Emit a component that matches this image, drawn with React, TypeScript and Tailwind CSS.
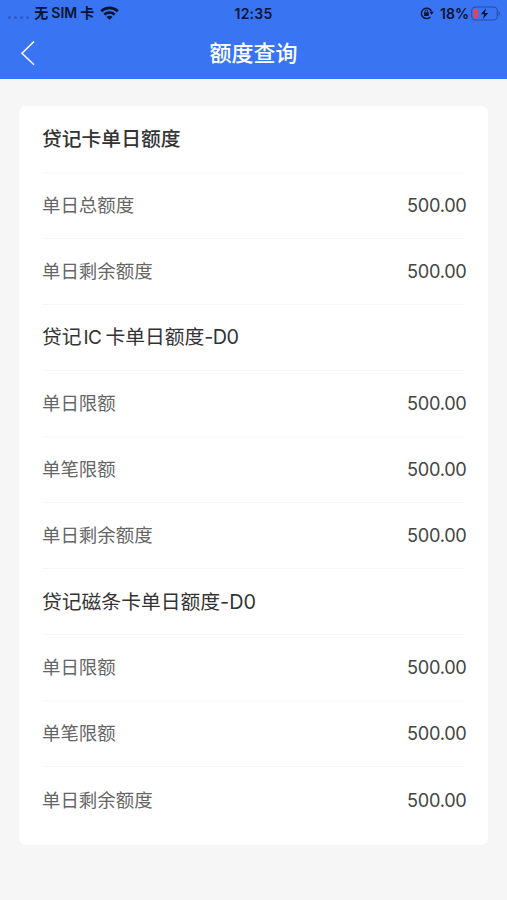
type Row = { label: string; value: string };
type Section = { title: React.ReactNode; bold?: boolean; rows: Row[] };

const sections: Section[] = [
  {
    title: '贷记卡单日额度',
    bold: true,
    rows: [
      { label: '单日总额度', value: '500.00' },
      { label: '单日剩余额度', value: '500.00' },
    ],
  },
  {
    title: (
      <>
        贷记<span className="ml-[2px] mr-[4px] text-[19px] tracking-[-0.6px]">IC</span>卡单日额度
        <span className="tracking-[-0.6px]">-D0</span>
      </>
    ),
    rows: [
      { label: '单日限额', value: '500.00' },
      { label: '单笔限额', value: '500.00' },
      { label: '单日剩余额度', value: '500.00' },
    ],
  },
  {
    title: '贷记磁条卡单日额度-D0',
    rows: [
      { label: '单日限额', value: '500.00' },
      { label: '单笔限额', value: '500.00' },
      { label: '单日剩余额度', value: '500.00' },
    ],
  },
];

function WifiIcon() {
  return (
    <svg className="ml-[6px] h-[14px] w-[19px]" viewBox="0 0 19 14" fill="none" stroke="#071432" strokeWidth="2.7">
      <path d="M1.2 5.2C5.8.7 13.2.7 17.8 5.2" />
      <path d="M4.3 8.6c2.9-2.8 7.5-2.8 10.4 0" />
      <path d="M9.5 13.8 6.5 10.9c1.7-1.5 4.3-1.5 6 0Z" fill="#071432" stroke="none" />
    </svg>
  );
}

function RotationLockIcon() {
  return (
    <svg className="h-[14px] w-[14px]" viewBox="0 0 14 14" fill="none" stroke="#071432">
      <path d="M10.4 10.9A5.2 5.2 0 1 1 11.5 5.6" strokeWidth="1.4" />
      <path d="M9.4 5.7h4.4l-2.2 3Z" fill="#071432" stroke="none" />
      <rect x="4.1" y="6.2" width="4.7" height="3.8" rx=".6" fill="#071432" stroke="none" />
      <path d="M5.1 6.4V5.3a1.35 1.35 0 0 1 2.7 0v1.1" strokeWidth="1" />
    </svg>
  );
}

function BatteryIcon() {
  return (
    <svg className="h-[15px] w-[30px]" viewBox="0 0 30 15">
      <rect x=".7" y="1" width="25.6" height="13" rx="3.8" fill="none" stroke="#254caa" strokeWidth="1.1" />
      <path d="M27.6 5.2c2 .7 2 3.9 0 4.6Z" fill="#254caa" />
      <path d="M4.3 2.8h2.3v9.4H4.3c-1.2 0-1.8-.7-1.8-1.8V4.6c0-1.1.6-1.8 1.8-1.8Z" fill="#f23f4c" />
      <path d="M15.1 2.2 9.9 8.2h3.3l-1.3 4.9 5.3-6.2h-3.4Z" fill="#071432" />
    </svg>
  );
}

function StatusBar() {
  return (
    <div className="grid h-[26px] grid-cols-[1fr_auto_1fr] items-center text-[14px] font-semibold text-[#071432]">
      <div className="flex items-center pl-[8px]">
        <div className="mt-[9px] flex gap-[2.6px]">
          {[0, 1, 2, 3].map((n) => (
            <span key={n} className="h-[3px] w-[3.4px] rounded-full bg-[#2c5bc6]" />
          ))}
        </div>
        <span className="ml-[5px] flex items-center leading-[20px]">
          <span className="text-[14px] font-bold">无</span>
          <span className="ml-[3px] mr-[3px]">SIM</span>
          <span className="text-[14px] font-bold">卡</span>
        </span>
        <WifiIcon />
      </div>
      <span className="tracking-[0.2px]">12:35</span>
      <div className="flex items-center justify-end pr-[6px]">
        <RotationLockIcon />
        <span className="ml-[6px] mr-[2px]">18%</span>
        <BatteryIcon />
      </div>
    </div>
  );
}

export default function App() {
  return (
    <div className="flex h-[900px] w-[507px] flex-col bg-[#f6f6f6] font-['Inter','Noto_Sans_CJK_SC',sans-serif]">
      <header className="h-[79px] shrink-0 bg-[#3975f3]">
        <StatusBar />
        <div className="grid h-[53px] grid-cols-[1fr_auto_1fr] items-center">
          <svg className="ml-[20px] h-[26px] w-[16px]" viewBox="0 0 16 26" fill="none" stroke="#fff" strokeWidth="1.5">
            <path d="M14 1.5 2 13.2 14 24.8" />
          </svg>
          <h1 className="text-[22px] font-medium leading-[30px] text-white">额度查询</h1>
        </div>
      </header>
      <main className="mx-[19px] mt-[27px] h-[739px] rounded-[7px] bg-white px-[23px] pt-px">
        {sections.map((section, i) => (
          <section key={i} className="group">
            <h2
              className={`flex h-[66.05px] items-center border-b border-[#f7f7f7] pt-[1px] text-[19.8px] text-[#333] ${
                section.bold ? 'font-medium' : 'font-normal'
              }`}
            >
              <span className="whitespace-nowrap">{section.title}</span>
            </h2>
            {section.rows.map((row, j) => (
              <div
                key={j}
                className="flex h-[66.05px] items-center justify-between border-b border-[#f7f7f7] text-[18.45px] group-last:last:border-b-0"
              >
                <span className="text-[#666]">{row.label}</span>
                <span className="-mr-[1.5px] text-[18.2px] tracking-[-0.3px] text-[#444]">{row.value}</span>
              </div>
            ))}
          </section>
        ))}
      </main>
    </div>
  );
}
